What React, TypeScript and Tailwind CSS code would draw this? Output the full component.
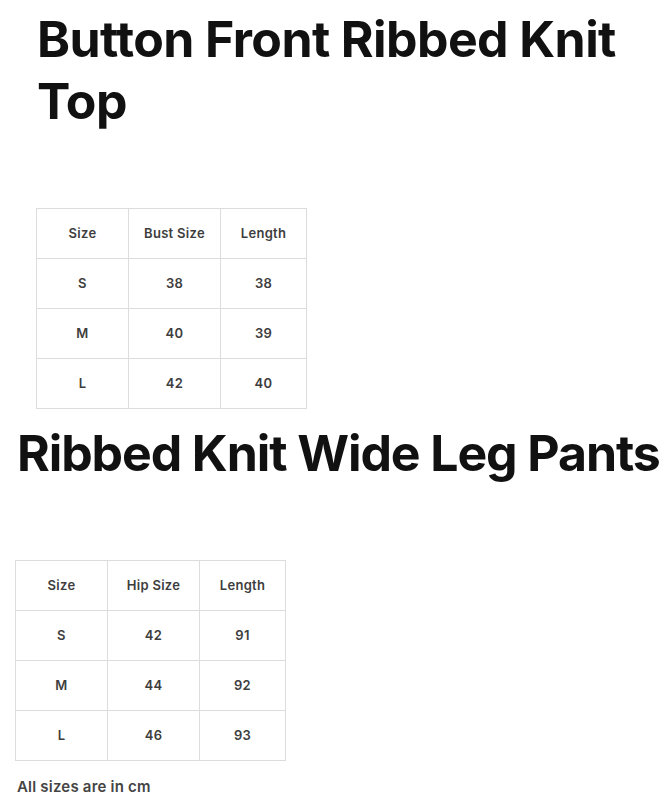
import React from 'react';

type Row = [string, string, string];

function SizeTable({ head, rows }: { head: Row; rows: Row[] }) {
  const cols = ['w-[92px]', 'w-[92px]', 'w-[86px]'];
  return (
    <table className="border-collapse text-[13px] font-semibold text-[#3d3d3d] tracking-[0.3px]">
      <thead>
        <tr>
          {head.map((h, i) => (
            <th key={h} className={`${cols[i]} h-[50px] border border-[#dcdcdc] text-center font-semibold`}>{h}</th>
          ))}
        </tr>
      </thead>
      <tbody>
        {rows.map((r) => (
          <tr key={r[0]}>
            {r.map((c, i) => (
              <td key={i} className={`${cols[i]} h-[50px] border border-[#dcdcdc] text-center`}>{c}</td>
            ))}
          </tr>
        ))}
      </tbody>
    </table>
  );
}

export default function App() {
  return (
    <div className="w-[660px] h-[800px] bg-white overflow-hidden font-['Inter',sans-serif] text-[#111]">
      <div className="pl-[36px] pt-[8px]">
        <h1 className="text-[50px] leading-[62px] font-bold tracking-[-0.6px] pl-px pr-4">Button Front Ribbed Knit Top</h1>
        <div className="mt-[76px]">
          <SizeTable
            head={['Size', 'Bust Size', 'Length']}
            rows={[['S', '38', '38'], ['M', '40', '39'], ['L', '42', '40']]}
          />
        </div>
      </div>
      <div className="pl-[15px]">
        <h2 className="text-[50px] leading-[62px] font-bold tracking-[-1.1px] pl-[2px] mt-[13px] whitespace-nowrap">Ribbed Knit Wide Leg Pants</h2>
        <div className="mt-[76px]">
          <SizeTable
            head={['Size', 'Hip Size', 'Length']}
            rows={[['S', '42', '91'], ['M', '44', '92'], ['L', '46', '93']]}
          />
        </div>
        <p className="mt-[15px] pl-[2px] text-[15px] font-semibold text-[#444] tracking-[0.2px]">All sizes are in cm</p>
      </div>
    </div>
  );
}
